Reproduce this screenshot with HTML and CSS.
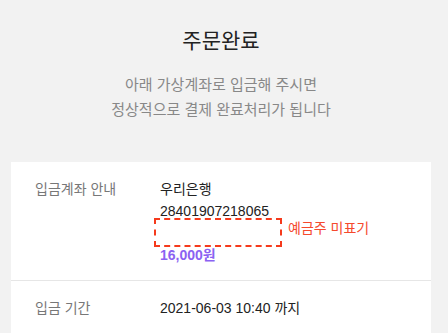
FILE: index.html
```html
<!DOCTYPE html>
<html lang="ko">
<head>
<meta charset="utf-8">
<link rel="stylesheet" href="styles.css">
</head>
<body>
<div class="page">
  <header class="head">
    <h1 class="title">주문완료</h1>
    <p class="desc">아래 가상계좌로 입금해 주시면<br>정상적으로 결제 완료처리가 됩니다</p>
  </header>
  <section class="card">
    <div class="row">
      <div class="label">입금계좌 안내</div>
      <div class="value">
        <div class="line">우리은행</div>
        <div class="line">28401907218065</div>
        <div class="line holder">
          <span class="mask"></span>
          <span class="note">예금주 미표기</span>
        </div>
        <div class="line price">16,000원</div>
      </div>
    </div>
    <div class="row">
      <div class="label">입금 기간</div>
      <div class="value">
        <div class="line">2021-06-03 10:40 까지</div>
      </div>
    </div>
  </section>
</div>
</body>
</html>
```
FILE: styles.css
```css
html, body {
  margin: 0;
  padding: 0;
  background: #f2f2f2;
  height: 100%;
  overflow: hidden;
}
body {
  font-family: "Liberation Sans", "Noto Sans CJK KR", sans-serif;
  color: #222;
}
.page {
  width: 442px;
  padding: 0 11px;
  box-sizing: border-box;
}
.head {
  text-align: center;
  padding-top: 26px;
}
.title {
  margin: 0;
  font-size: 21px;
  font-weight: 400;
  line-height: 30px;
  color: #222;
}
.desc {
  margin: 16px 0 0;
  font-size: 15px;
  line-height: 25px;
  color: #888;
}
.card {
  margin-top: 40px;
  background: #fff;
}
.row {
  display: flex;
  padding: 16px 24px 14px;
}
.row + .row {
  border-top: 1px solid #e6e6e6;
  padding-top: 16px;
}
.label {
  width: 125px;
  flex: none;
  font-size: 14px;
  line-height: 22px;
  color: #777;
}
.value {
  flex: 1;
  font-size: 14px;
  line-height: 22px;
  color: #222;
}
.line {
  height: 22px;
}
.holder {
  position: relative;
}
.mask {
  position: absolute;
  left: -6px;
  top: -4px;
  width: 124px;
  height: 25px;
  border: 2px dashed #f53a1c;
}
.note {
  position: absolute;
  left: 128px;
  top: -5px;
  font-size: 14px;
  color: #f5492d;
  white-space: nowrap;
}
.price {
  font-weight: 700;
  color: #8b62f2;
}
```
